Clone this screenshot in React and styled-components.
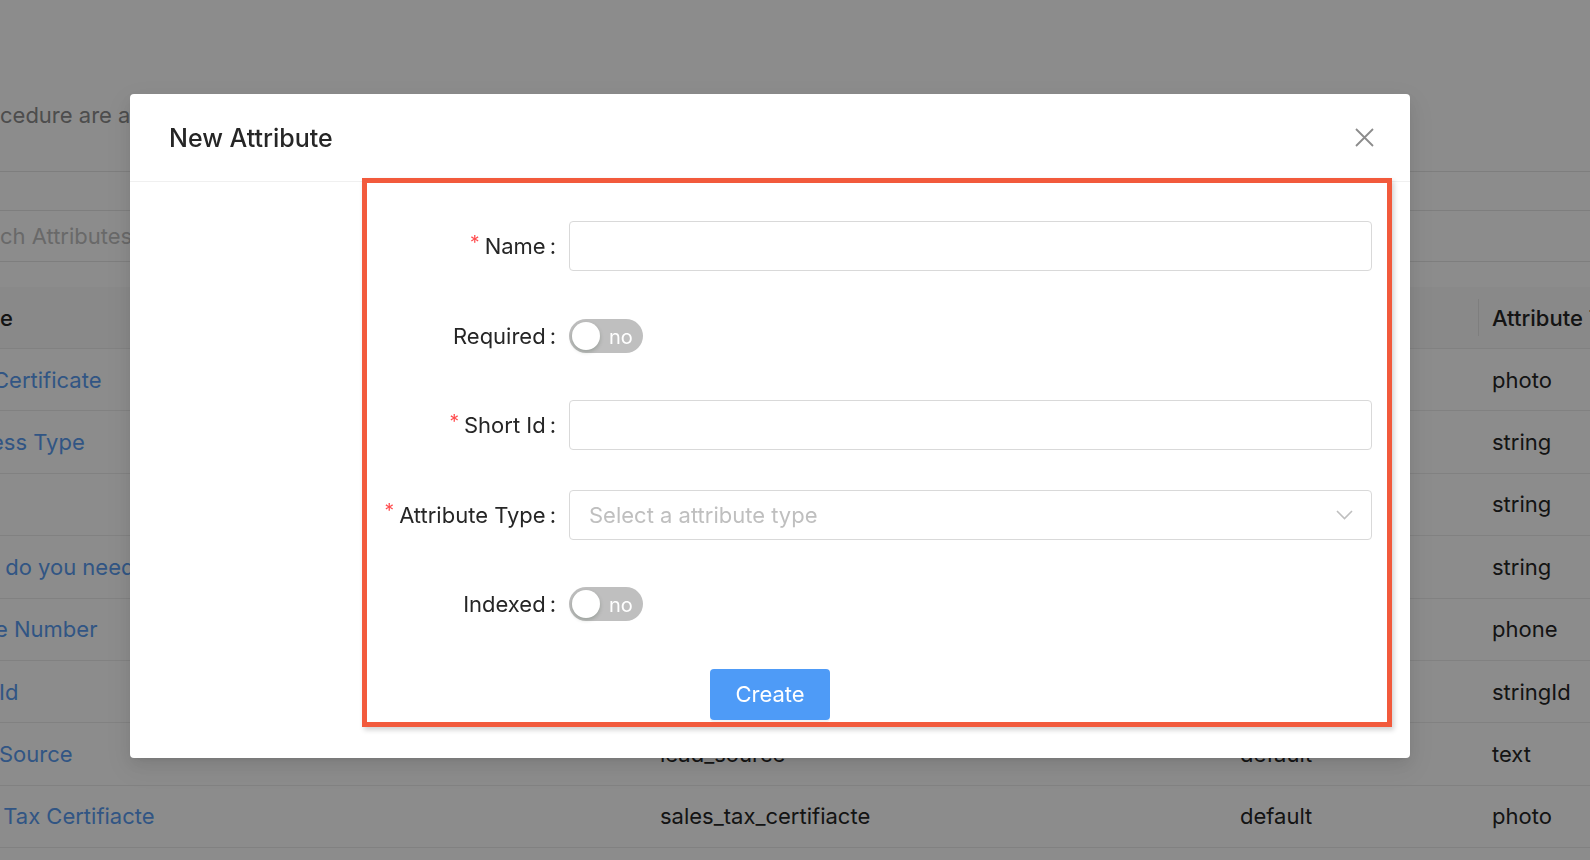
import React from "react";
import styled, { createGlobalStyle } from "styled-components";

const GlobalStyle = createGlobalStyle`
  html, body {
    margin: 0;
    padding: 0;
    background: #ffffff;
    overflow: hidden;
  }
  body {
    font-family: Inter, "Noto Sans", "Liberation Sans", sans-serif;
    color: #262626;
  }
  * {
    box-sizing: border-box;
  }
`;

/* ---------- page behind the dialog ---------- */

const Page = styled.div`
  width: 100vw;
  height: 100vh;
  overflow: hidden;
  background: #ffffff;
`;

const Intro = styled.div`
  height: 172px;
  padding-top: 100px;
  line-height: 30px;
  font-size: 22px;
  color: #8c8c8c;
  white-space: nowrap;
  border-bottom: 1px solid #e6e6e6;
`;

const TabStrip = styled.div`
  height: 38px;
`;

const SearchBar = styled.div`
  height: 52px;
  display: flex;
  align-items: center;
  font-size: 22px;
  color: #bfbfbf;
  white-space: nowrap;
  border-top: 1px solid #e6e6e6;
  border-bottom: 1px solid #e6e6e6;
`;

const Table = styled.div`
  margin-top: 25px;
`;

const TableRow = styled.div`
  display: grid;
  grid-template-columns: 646px 580px 252px 1fr;
  height: ${(p) => (p.$head ? "62px" : "62.4px")};
  background: ${(p) => (p.$head ? "#fafafa" : "#ffffff")};
  border-bottom: 1px solid #ececec;
  font-size: 22px;
  font-weight: ${(p) => (p.$head ? 500 : 400)};
`;

const Cell = styled.div`
  position: relative;
  display: flex;
  align-items: center;
  padding-left: ${(p) => (p.$first ? "0" : "14px")};
  white-space: nowrap;
  overflow: hidden;
  color: ${(p) => (p.$link ? "#5a9cf0" : "#262626")};

  ${(p) =>
    p.$divider &&
    `
    &::before {
      content: "";
      position: absolute;
      left: 0;
      top: 12px;
      bottom: 12px;
      width: 1px;
      background: #e6e6e6;
    }
  `}
`;

const CutText = styled.span`
  margin-left: ${(p) => p.$shift || 0}px;
`;

/* ---------- dialog ---------- */

const Mask = styled.div`
  position: fixed;
  inset: 0;
  background: rgba(0, 0, 0, 0.45);
  padding: 94px 0 0 130px;
`;

const Modal = styled.div`
  position: relative;
  width: 1280px;
  background: #ffffff;
  border-radius: 4px;
  box-shadow: 0 6px 16px rgba(0, 0, 0, 0.08), 0 3px 6px -4px rgba(0, 0, 0, 0.12),
    0 9px 28px 8px rgba(0, 0, 0, 0.05);
`;

const ModalHeader = styled.div`
  height: 88px;
  display: flex;
  align-items: center;
  justify-content: space-between;
  padding: 0 36px 0 39px;
  border-bottom: 1px solid #f0f0f0;
`;

const ModalTitle = styled.div`
  font-size: 25px;
  font-weight: 500;
  color: #262626;
`;

const CloseButton = styled.button`
  width: 20px;
  height: 20px;
  padding: 0;
  border: 0;
  background: transparent;
  display: flex;
  align-items: center;
  justify-content: center;
  cursor: pointer;
`;

const ModalBody = styled.div`
  display: flex;
  flex-direction: column;
  gap: 39.5px;
  padding: 39px 38px 38px 38px;
`;

const FormRow = styled.div`
  display: grid;
  grid-template-columns: 388px 1fr;
  column-gap: 13px;
  height: 50px;
  align-items: center;
`;

const Label = styled.label`
  display: flex;
  align-items: center;
  justify-content: flex-end;
  font-size: 22px;
  color: #262626;
  white-space: nowrap;

  &::after {
    content: ":";
    margin-left: 4px;
  }
`;

const Star = styled.span`
  color: #ff4d4f;
  font-size: 19px;
  margin-right: 5px;
  position: relative;
  top: -4px;
`;

const TextInput = styled.input`
  width: 100%;
  height: 50px;
  border: 1px solid #d9d9d9;
  border-radius: 4px;
  padding: 0 18px;
  font-size: 22px;
  font-family: inherit;
  outline: none;
  background: #ffffff;
`;

const SelectBox = styled.div`
  height: 50px;
  display: flex;
  align-items: center;
  justify-content: space-between;
  border: 1px solid #d9d9d9;
  border-radius: 4px;
  padding: 0 18px 0 19px;
  font-size: 22px;
  color: #bfbfbf;
`;

const Switch = styled.button`
  width: 74px;
  height: 34px;
  border: 0;
  border-radius: 17px;
  background: #bfbfbf;
  padding: 0 0 0 3px;
  display: flex;
  align-items: center;
  gap: 9px;
  cursor: pointer;
  font-family: inherit;
`;

const Knob = styled.span`
  width: 28px;
  height: 28px;
  border-radius: 50%;
  background: #ffffff;
  box-shadow: 0 2px 4px rgba(0, 35, 11, 0.2);
`;

const SwitchText = styled.span`
  font-size: 20px;
  color: #ffffff;
  line-height: 1;
  position: relative;
  top: 1px;
`;

const ButtonRow = styled.div`
  display: flex;
  justify-content: center;
`;

const PrimaryButton = styled.button`
  width: 120px;
  height: 51px;
  border: 0;
  border-radius: 4px;
  background: #4e9bf7;
  color: #ffffff;
  font-size: 22px;
  font-family: inherit;
  cursor: pointer;
  box-shadow: 0 2px 0 rgba(0, 0, 0, 0.045);
`;

/* red annotation frame drawn over the form */
const Highlight = styled.div`
  position: absolute;
  left: 232px;
  top: 84px;
  width: 1030px;
  height: 549px;
  border: 5px solid #f25a3c;
  box-shadow: 2px 3px 5px rgba(0, 0, 0, 0.18);
  pointer-events: none;
`;

const CloseIcon = () => (
  <svg width="19" height="19" viewBox="0 0 19 19">
    <path d="M1 1 L18 18 M18 1 L1 18" stroke="#8c8c8c" strokeWidth="1.8" fill="none" />
  </svg>
);

const ChevronDown = () => (
  <svg width="17" height="10" viewBox="0 0 17 10">
    <path d="M1 1 L8.5 8.5 L16 1" stroke="#bfbfbf" strokeWidth="1.6" fill="none" />
  </svg>
);

const linhas = [
  { nome: "Certificate", desloc: -7, tipo: "photo" },
  { nome: "ess Type", desloc: -9, tipo: "string" },
  { nome: "", tipo: "string" },
  { nome: "\u00a0do you need", desloc: -1, tipo: "string" },
  { nome: "e Number", desloc: -5, tipo: "phone" },
  { nome: "Id", desloc: -1, tipo: "stringId" },
  { nome: "Source", desloc: -1, chave: "lead_source", escopo: "default", tipo: "text" },
  { nome: "\u00a0Tax Certifiacte", desloc: -3, chave: "sales_tax_certifiacte", escopo: "default", tipo: "photo" },
];

const ToggleField = ({ label }) => (
  <FormRow>
    <Label>{label}</Label>
    <div>
      <Switch type="button">
        <Knob />
        <SwitchText>no</SwitchText>
      </Switch>
    </div>
  </FormRow>
);

export default function App() {
  return (
    <>
      <GlobalStyle />
      <Page>
        <Intro>cedure are available for this workflow</Intro>
        <TabStrip />
        <SearchBar>ch Attributes</SearchBar>
        <Table>
          <TableRow $head>
            <Cell $first>e</Cell>
            <Cell>Short Id</Cell>
            <Cell>Scope</Cell>
            <Cell $divider>Attribute Type</Cell>
          </TableRow>
          {linhas.map((l, i) => (
            <TableRow key={i}>
              <Cell $first $link>
                <CutText $shift={l.desloc}>{l.nome}</CutText>
              </Cell>
              <Cell>{l.chave || ""}</Cell>
              <Cell>{l.escopo || ""}</Cell>
              <Cell>{l.tipo}</Cell>
            </TableRow>
          ))}
        </Table>
      </Page>

      <Mask>
        <Modal>
          <ModalHeader>
            <ModalTitle>New Attribute</ModalTitle>
            <CloseButton type="button" aria-label="close">
              <CloseIcon />
            </CloseButton>
          </ModalHeader>
          <ModalBody>
            <FormRow>
              <Label>
                <Star>*</Star>Name
              </Label>
              <TextInput />
            </FormRow>
            <ToggleField label="Required" />
            <FormRow>
              <Label>
                <Star>*</Star>Short Id
              </Label>
              <TextInput />
            </FormRow>
            <FormRow>
              <Label>
                <Star>*</Star>Attribute Type
              </Label>
              <SelectBox>
                <span>Select a attribute type</span>
                <ChevronDown />
              </SelectBox>
            </FormRow>
            <ToggleField label="Indexed" />
            <ButtonRow>
              <PrimaryButton type="button">Create</PrimaryButton>
            </ButtonRow>
          </ModalBody>
          <Highlight />
        </Modal>
      </Mask>
    </>
  );
}
